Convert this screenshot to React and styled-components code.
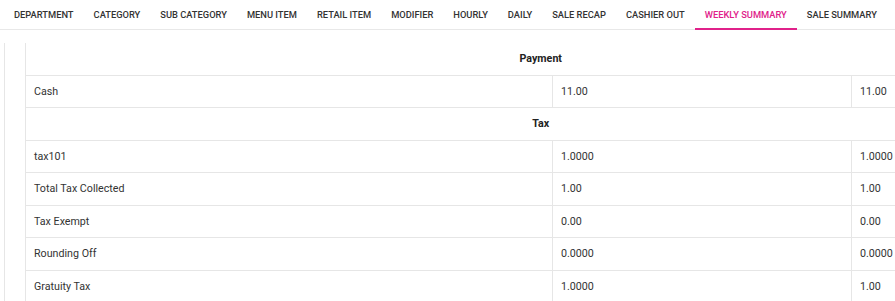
import styled, { createGlobalStyle } from "styled-components";

const GlobalStyle = createGlobalStyle`
  html, body {
    margin: 0;
    padding: 0;
    background: #fff;
    font-family: Roboto, "Liberation Sans", sans-serif;
    overflow: hidden;
  }
`;

const Page = styled.div`
  width: 895px;
  height: 301px;
  overflow: hidden;
`;

const TabBar = styled.nav`
  display: flex;
  padding-left: 4px;
  height: 29px;
  border-bottom: 1px solid #e8e8e8;
`;

const Tab = styled.div`
  padding: 0 10px;
  display: flex;
  align-items: center;
  font-size: 9.32px;
  font-weight: 500;
  white-space: nowrap;
  color: ${(p) => (p.active ? "#e0218a" : "#333")};
  border-bottom: 2px solid ${(p) => (p.active ? "#e0218a" : "transparent")};
  margin-bottom: -1px;
`;

const Body = styled.div`
  padding: 13px 0 0 4px;
`;

const Rail = styled.div`
  border-left: 1px solid #e6e6e6;
  padding-left: 20px;
`;

const Table = styled.table`
  width: 1030px;
  table-layout: fixed;
  border-collapse: collapse;
  border-left: 1px solid #e6e6e6;
  font-size: 10.7px;
  color: #333;
`;

const SectionCell = styled.td`
  height: 31.5px;
  padding: 0;
  text-align: center;
  font-weight: 700;
  color: #222;
  border-bottom: 1px solid #e6e6e6;
`;

const Cell = styled.td`
  height: 31.5px;
  padding: 0 8px;
  border-bottom: 1px solid #e6e6e6;
  border-left: ${(p) => (p.first ? "none" : "1px solid #e6e6e6")};
`;

const Col = styled.col`
  width: ${(p) => p.w}px;
`;

const tabs = [
  "DEPARTMENT",
  "CATEGORY",
  "SUB CATEGORY",
  "MENU ITEM",
  "RETAIL ITEM",
  "MODIFIER",
  "HOURLY",
  "DAILY",
  "SALE RECAP",
  "CASHIER OUT",
  "WEEKLY SUMMARY",
  "SALE SUMMARY",
];

const sections = [
  { title: "Payment", rows: [["Cash", "11.00", "11.00"]] },
  {
    title: "Tax",
    rows: [
      ["tax101", "1.0000", "1.0000"],
      ["Total Tax Collected", "1.00", "1.00"],
      ["Tax Exempt", "0.00", "0.00"],
      ["Rounding Off", "0.0000", "0.0000"],
      ["Gratuity Tax", "1.0000", "1.00"],
    ],
  },
];

const App = () => {
  return (
    <Page>
      <GlobalStyle />
      <TabBar>
        {tabs.map((t) => (
          <Tab key={t} active={t === "WEEKLY SUMMARY"}>
            {t}
          </Tab>
        ))}
      </TabBar>
      <Body>
        <Rail>
          <Table>
            <colgroup>
              <Col w={527} />
              <Col w={299} />
              <Col w={204} />
            </colgroup>
            <tbody>
              {sections.map((s) => [
                <tr key={s.title}>
                  <SectionCell colSpan={3}>{s.title}</SectionCell>
                </tr>,
                ...s.rows.map((r) => (
                  <tr key={r[0]}>
                    <Cell first>{r[0]}</Cell>
                    <Cell>{r[1]}</Cell>
                    <Cell>{r[2]}</Cell>
                  </tr>
                )),
              ])}
            </tbody>
          </Table>
        </Rail>
      </Body>
    </Page>
  );
};

export default App;
